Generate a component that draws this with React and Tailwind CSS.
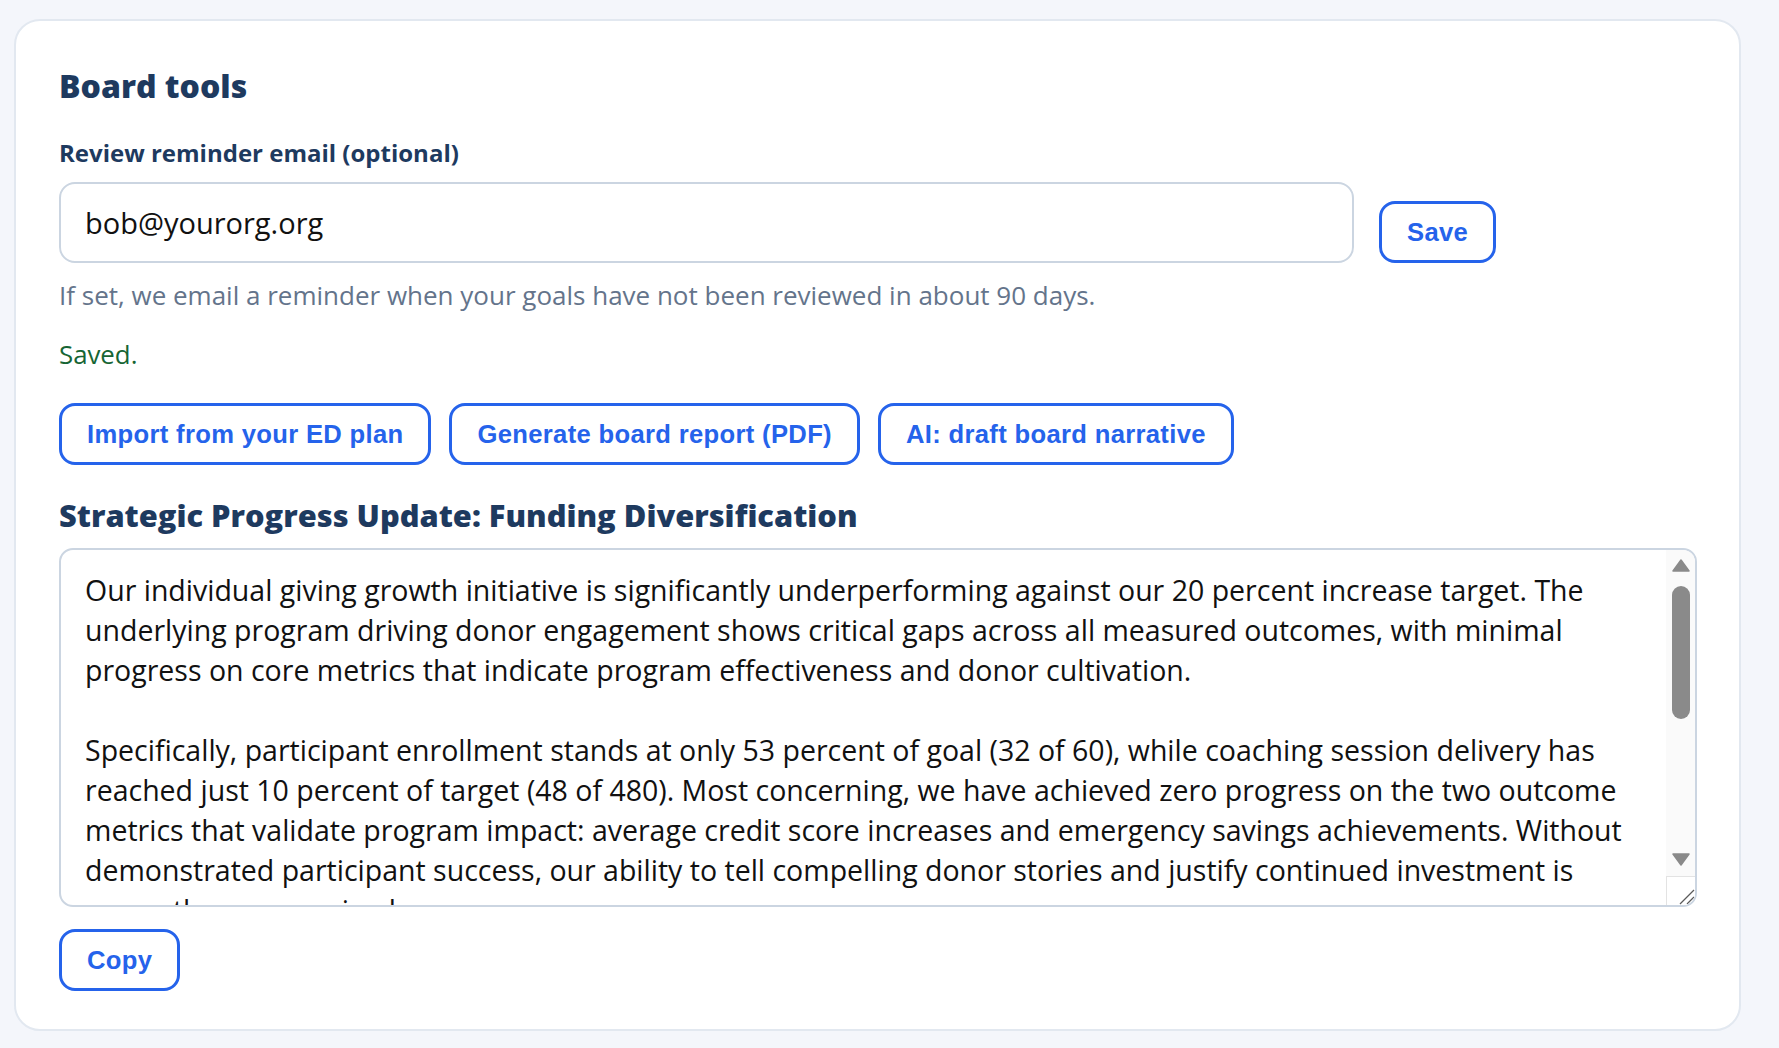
export default function App() {
  const text = [
    "Our individual giving growth initiative is significantly underperforming against our 20 percent increase target. The",
    "underlying program driving donor engagement shows critical gaps across all measured outcomes, with minimal",
    "progress on core metrics that indicate program effectiveness and donor cultivation.",
    "",
    "Specifically, participant enrollment stands at only 53 percent of goal (32 of 60), while coaching session delivery has",
    "reached just 10 percent of target (48 of 480). Most concerning, we have achieved zero progress on the two outcome",
    "metrics that validate program impact: average credit score increases and emergency savings achievements. Without",
    "demonstrated participant success, our ability to tell compelling donor stories and justify continued investment is",
    "currently compromised.",
    "",
    "We recommend the board prioritize a focused review of program delivery capacity, recruitment pipelines and",
    "outcome tracking over the next quarter, so that donor communications can be grounded in measurable results.",
  ].join("\n");

  const btn =
    "border-[3px] border-[#2563eb] rounded-[16px] px-[25px] py-[13px] bg-white text-[#2563eb] font-['Liberation_Sans',Arial,sans-serif] font-bold text-[25.6px] leading-[30px] tracking-[0.33px] whitespace-nowrap";

  return (
    <div className="min-h-screen bg-[#f4f6fb] pt-[19px] pl-[14px] font-['Open_Sans',sans-serif]">
      <div className="w-[1727px] h-[1012px] bg-white border-2 border-[#e2e8f0] rounded-[26px] pl-[43px] pr-[42px] pt-[45px] flex flex-col items-start">
        <h2 className="text-[32px] leading-[40px] font-extrabold text-[#1e3a5f]">Board tools</h2>
        <label className="mt-[32px] text-[24px] leading-[30px] font-bold text-[#1e3a5f]">
          Review reminder email (optional)
        </label>
        <div className="mt-[14px] flex items-end gap-[25px]">
          <input
            readOnly
            defaultValue="bob@yourorg.org"
            className="w-[1295px] h-[81px] border-2 border-[#cbd5e1] rounded-[16px] pl-[24px] text-[29px] text-[#111] outline-none bg-white"
          />
          <button className={btn}>Save</button>
        </div>
        <p className="mt-[16px] text-[26px] leading-[32px] text-[#64748b]">
          If set, we email a reminder when your goals have not been reviewed in about 90 days.
        </p>
        <p className="mt-[27px] text-[25.8px] leading-[32px] text-[#166534]">Saved.</p>
        <div className="mt-[33px] flex gap-[18px]">
          <button className={btn}>Import from your ED plan</button>
          <button className={btn}>Generate board report (PDF)</button>
          <button className={btn}>AI: draft board narrative</button>
        </div>
        <h3 className="mt-[30px] text-[30.8px] leading-[40px] font-extrabold text-[#1e3a5f]">
          Strategic Progress Update: Funding Diversification
        </h3>
        <div className="mt-[13px] w-full h-[359px] border-2 border-[#cbd5e1] rounded-[14px] overflow-hidden flex bg-white">
          <div className="flex-1 overflow-hidden pl-[24px] pt-[20px] text-[28.5px] leading-[40px] text-[#111] whitespace-pre">
            {text}
          </div>
          <div className="w-[29px] h-full bg-[#fafafa] flex flex-col items-center">
            <svg width="18" height="13" viewBox="0 0 18 13" className="mt-[9px]">
              <path d="M9 1 L17 12 L1 12 Z" fill="#8a8a8a" stroke="#8a8a8a" strokeWidth="1.5" strokeLinejoin="round" />
            </svg>
            <div className="mt-[14px] w-[18px] h-[133px] rounded-full bg-[#8a8a8a]" />
            <div className="flex-1" />
            <svg width="18" height="13" viewBox="0 0 18 13">
              <path d="M1 1 L17 1 L9 12 Z" fill="#8a8a8a" stroke="#8a8a8a" strokeWidth="1.5" strokeLinejoin="round" />
            </svg>
            <div className="mt-[10px] w-full h-[29px] border-t border-l border-[#e3e3e3] bg-white flex items-end justify-end">
              <svg width="28" height="28" viewBox="0 0 28 28">
                <line x1="13" y1="27" x2="27" y2="13" stroke="#5a5a5a" strokeWidth="1.3" />
                <line x1="20" y1="27" x2="27" y2="20" stroke="#5a5a5a" strokeWidth="1.3" />
              </svg>
            </div>
          </div>
        </div>
        <button className={`${btn} mt-[22px]`}>Copy</button>
      </div>
    </div>
  );
}
